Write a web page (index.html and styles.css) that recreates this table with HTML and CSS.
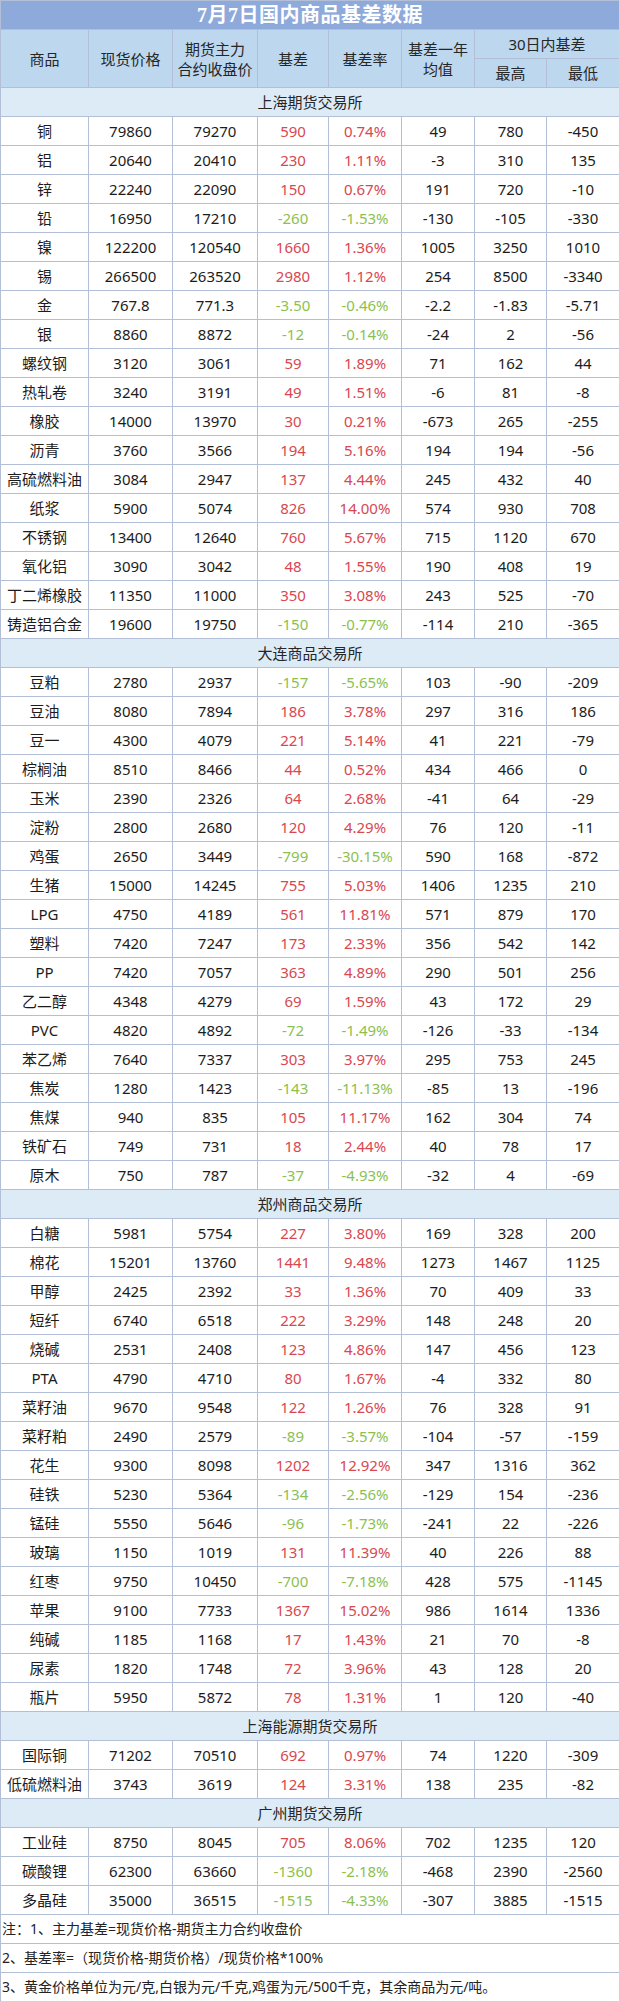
FILE: index.html
```html
<!DOCTYPE html>
<html lang="zh-CN">
<head>
<meta charset="utf-8">
<title>7月7日国内商品基差数据</title>
<link rel="stylesheet" href="styles.css">
</head>
<body>
<table class="basis">
<colgroup>
<col class="c1"><col class="c2"><col class="c3"><col class="c4"><col class="c5"><col class="c6"><col class="c7"><col class="c8">
</colgroup>
<thead>
<tr class="title"><th colspan="8">7月7日国内商品基差数据</th></tr>
<tr class="head">
<th rowspan="2">商品</th><th rowspan="2">现货价格</th><th rowspan="2" class="two">期货主力<br>合约收盘价</th><th rowspan="2">基差</th><th rowspan="2">基差率</th><th rowspan="2" class="two">基差一年<br>均值</th><th colspan="2">30日内基差</th>
</tr>
<tr class="head"><th>最高</th><th>最低</th></tr>
</thead>
<tbody>
<tr class="sec"><td colspan="8">上海期货交易所</td></tr>
<tr><td>铜</td><td>79860</td><td>79270</td><td class="r">590</td><td class="r">0.74%</td><td>49</td><td>780</td><td>-450</td></tr>
<tr><td>铝</td><td>20640</td><td>20410</td><td class="r">230</td><td class="r">1.11%</td><td>-3</td><td>310</td><td>135</td></tr>
<tr><td>锌</td><td>22240</td><td>22090</td><td class="r">150</td><td class="r">0.67%</td><td>191</td><td>720</td><td>-10</td></tr>
<tr><td>铅</td><td>16950</td><td>17210</td><td class="g">-260</td><td class="g">-1.53%</td><td>-130</td><td>-105</td><td>-330</td></tr>
<tr><td>镍</td><td>122200</td><td>120540</td><td class="r">1660</td><td class="r">1.36%</td><td>1005</td><td>3250</td><td>1010</td></tr>
<tr><td>锡</td><td>266500</td><td>263520</td><td class="r">2980</td><td class="r">1.12%</td><td>254</td><td>8500</td><td>-3340</td></tr>
<tr><td>金</td><td>767.8</td><td>771.3</td><td class="g">-3.50</td><td class="g">-0.46%</td><td>-2.2</td><td>-1.83</td><td>-5.71</td></tr>
<tr><td>银</td><td>8860</td><td>8872</td><td class="g">-12</td><td class="g">-0.14%</td><td>-24</td><td>2</td><td>-56</td></tr>
<tr><td>螺纹钢</td><td>3120</td><td>3061</td><td class="r">59</td><td class="r">1.89%</td><td>71</td><td>162</td><td>44</td></tr>
<tr><td>热轧卷</td><td>3240</td><td>3191</td><td class="r">49</td><td class="r">1.51%</td><td>-6</td><td>81</td><td>-8</td></tr>
<tr><td>橡胶</td><td>14000</td><td>13970</td><td class="r">30</td><td class="r">0.21%</td><td>-673</td><td>265</td><td>-255</td></tr>
<tr><td>沥青</td><td>3760</td><td>3566</td><td class="r">194</td><td class="r">5.16%</td><td>194</td><td>194</td><td>-56</td></tr>
<tr><td>高硫燃料油</td><td>3084</td><td>2947</td><td class="r">137</td><td class="r">4.44%</td><td>245</td><td>432</td><td>40</td></tr>
<tr><td>纸浆</td><td>5900</td><td>5074</td><td class="r">826</td><td class="r">14.00%</td><td>574</td><td>930</td><td>708</td></tr>
<tr><td>不锈钢</td><td>13400</td><td>12640</td><td class="r">760</td><td class="r">5.67%</td><td>715</td><td>1120</td><td>670</td></tr>
<tr><td>氧化铝</td><td>3090</td><td>3042</td><td class="r">48</td><td class="r">1.55%</td><td>190</td><td>408</td><td>19</td></tr>
<tr><td>丁二烯橡胶</td><td>11350</td><td>11000</td><td class="r">350</td><td class="r">3.08%</td><td>243</td><td>525</td><td>-70</td></tr>
<tr><td>铸造铝合金</td><td>19600</td><td>19750</td><td class="g">-150</td><td class="g">-0.77%</td><td>-114</td><td>210</td><td>-365</td></tr>
<tr class="sec"><td colspan="8">大连商品交易所</td></tr>
<tr><td>豆粕</td><td>2780</td><td>2937</td><td class="g">-157</td><td class="g">-5.65%</td><td>103</td><td>-90</td><td>-209</td></tr>
<tr><td>豆油</td><td>8080</td><td>7894</td><td class="r">186</td><td class="r">3.78%</td><td>297</td><td>316</td><td>186</td></tr>
<tr><td>豆一</td><td>4300</td><td>4079</td><td class="r">221</td><td class="r">5.14%</td><td>41</td><td>221</td><td>-79</td></tr>
<tr><td>棕榈油</td><td>8510</td><td>8466</td><td class="r">44</td><td class="r">0.52%</td><td>434</td><td>466</td><td>0</td></tr>
<tr><td>玉米</td><td>2390</td><td>2326</td><td class="r">64</td><td class="r">2.68%</td><td>-41</td><td>64</td><td>-29</td></tr>
<tr><td>淀粉</td><td>2800</td><td>2680</td><td class="r">120</td><td class="r">4.29%</td><td>76</td><td>120</td><td>-11</td></tr>
<tr><td>鸡蛋</td><td>2650</td><td>3449</td><td class="g">-799</td><td class="g">-30.15%</td><td>590</td><td>168</td><td>-872</td></tr>
<tr><td>生猪</td><td>15000</td><td>14245</td><td class="r">755</td><td class="r">5.03%</td><td>1406</td><td>1235</td><td>210</td></tr>
<tr><td>LPG</td><td>4750</td><td>4189</td><td class="r">561</td><td class="r">11.81%</td><td>571</td><td>879</td><td>170</td></tr>
<tr><td>塑料</td><td>7420</td><td>7247</td><td class="r">173</td><td class="r">2.33%</td><td>356</td><td>542</td><td>142</td></tr>
<tr><td>PP</td><td>7420</td><td>7057</td><td class="r">363</td><td class="r">4.89%</td><td>290</td><td>501</td><td>256</td></tr>
<tr><td>乙二醇</td><td>4348</td><td>4279</td><td class="r">69</td><td class="r">1.59%</td><td>43</td><td>172</td><td>29</td></tr>
<tr><td>PVC</td><td>4820</td><td>4892</td><td class="g">-72</td><td class="g">-1.49%</td><td>-126</td><td>-33</td><td>-134</td></tr>
<tr><td>苯乙烯</td><td>7640</td><td>7337</td><td class="r">303</td><td class="r">3.97%</td><td>295</td><td>753</td><td>245</td></tr>
<tr><td>焦炭</td><td>1280</td><td>1423</td><td class="g">-143</td><td class="g">-11.13%</td><td>-85</td><td>13</td><td>-196</td></tr>
<tr><td>焦煤</td><td>940</td><td>835</td><td class="r">105</td><td class="r">11.17%</td><td>162</td><td>304</td><td>74</td></tr>
<tr><td>铁矿石</td><td>749</td><td>731</td><td class="r">18</td><td class="r">2.44%</td><td>40</td><td>78</td><td>17</td></tr>
<tr><td>原木</td><td>750</td><td>787</td><td class="g">-37</td><td class="g">-4.93%</td><td>-32</td><td>4</td><td>-69</td></tr>
<tr class="sec"><td colspan="8">郑州商品交易所</td></tr>
<tr><td>白糖</td><td>5981</td><td>5754</td><td class="r">227</td><td class="r">3.80%</td><td>169</td><td>328</td><td>200</td></tr>
<tr><td>棉花</td><td>15201</td><td>13760</td><td class="r">1441</td><td class="r">9.48%</td><td>1273</td><td>1467</td><td>1125</td></tr>
<tr><td>甲醇</td><td>2425</td><td>2392</td><td class="r">33</td><td class="r">1.36%</td><td>70</td><td>409</td><td>33</td></tr>
<tr><td>短纤</td><td>6740</td><td>6518</td><td class="r">222</td><td class="r">3.29%</td><td>148</td><td>248</td><td>20</td></tr>
<tr><td>烧碱</td><td>2531</td><td>2408</td><td class="r">123</td><td class="r">4.86%</td><td>147</td><td>456</td><td>123</td></tr>
<tr><td>PTA</td><td>4790</td><td>4710</td><td class="r">80</td><td class="r">1.67%</td><td>-4</td><td>332</td><td>80</td></tr>
<tr><td>菜籽油</td><td>9670</td><td>9548</td><td class="r">122</td><td class="r">1.26%</td><td>76</td><td>328</td><td>91</td></tr>
<tr><td>菜籽粕</td><td>2490</td><td>2579</td><td class="g">-89</td><td class="g">-3.57%</td><td>-104</td><td>-57</td><td>-159</td></tr>
<tr><td>花生</td><td>9300</td><td>8098</td><td class="r">1202</td><td class="r">12.92%</td><td>347</td><td>1316</td><td>362</td></tr>
<tr><td>硅铁</td><td>5230</td><td>5364</td><td class="g">-134</td><td class="g">-2.56%</td><td>-129</td><td>154</td><td>-236</td></tr>
<tr><td>锰硅</td><td>5550</td><td>5646</td><td class="g">-96</td><td class="g">-1.73%</td><td>-241</td><td>22</td><td>-226</td></tr>
<tr><td>玻璃</td><td>1150</td><td>1019</td><td class="r">131</td><td class="r">11.39%</td><td>40</td><td>226</td><td>88</td></tr>
<tr><td>红枣</td><td>9750</td><td>10450</td><td class="g">-700</td><td class="g">-7.18%</td><td>428</td><td>575</td><td>-1145</td></tr>
<tr><td>苹果</td><td>9100</td><td>7733</td><td class="r">1367</td><td class="r">15.02%</td><td>986</td><td>1614</td><td>1336</td></tr>
<tr><td>纯碱</td><td>1185</td><td>1168</td><td class="r">17</td><td class="r">1.43%</td><td>21</td><td>70</td><td>-8</td></tr>
<tr><td>尿素</td><td>1820</td><td>1748</td><td class="r">72</td><td class="r">3.96%</td><td>43</td><td>128</td><td>20</td></tr>
<tr><td>瓶片</td><td>5950</td><td>5872</td><td class="r">78</td><td class="r">1.31%</td><td>1</td><td>120</td><td>-40</td></tr>
<tr class="sec"><td colspan="8">上海能源期货交易所</td></tr>
<tr><td>国际铜</td><td>71202</td><td>70510</td><td class="r">692</td><td class="r">0.97%</td><td>74</td><td>1220</td><td>-309</td></tr>
<tr><td>低硫燃料油</td><td>3743</td><td>3619</td><td class="r">124</td><td class="r">3.31%</td><td>138</td><td>235</td><td>-82</td></tr>
<tr class="sec"><td colspan="8">广州期货交易所</td></tr>
<tr><td>工业硅</td><td>8750</td><td>8045</td><td class="r">705</td><td class="r">8.06%</td><td>702</td><td>1235</td><td>120</td></tr>
<tr><td>碳酸锂</td><td>62300</td><td>63660</td><td class="g">-1360</td><td class="g">-2.18%</td><td>-468</td><td>2390</td><td>-2560</td></tr>
<tr><td>多晶硅</td><td>35000</td><td>36515</td><td class="g">-1515</td><td class="g">-4.33%</td><td>-307</td><td>3885</td><td>-1515</td></tr>
</tbody>
<tfoot>
<tr class="note"><td colspan="8">注：1、主力基差=现货价格-期货主力合约收盘价</td></tr>
<tr class="note"><td colspan="8">2、基差率=（现货价格-期货价格）/现货价格*100%</td></tr>
<tr class="note"><td colspan="8">3、黄金价格单位为元/克,白银为元/千克,鸡蛋为元/500千克，其余商品为元/吨。</td></tr>
</tfoot>
</table>
</body>
</html>
```
FILE: styles.css
```css
html, body {
  margin: 0;
  padding: 0;
  background: #ffffff;
}

.basis {
  width: 619px;
  table-layout: fixed;
  border-collapse: collapse;
  font-family: "Noto Sans", "Noto Sans CJK SC", sans-serif;
  font-size: 15px;
  color: #1c1c1c;
}

.c1 { width: 88px; }
.c2 { width: 84px; }
.c3 { width: 85px; }
.c4 { width: 71px; }
.c5 { width: 73px; }
.c6 { width: 73px; }
.c7 { width: 72px; }
.c8 { width: 73px; }

.basis th,
.basis td {
  border: 1px solid #b3bfd6;
  padding: 0;
  text-align: center;
  vertical-align: middle;
  white-space: nowrap;
  font-weight: normal;
  line-height: 20px;
}

.basis tr {
  height: 29px;
}

.title th {
  background: #8eaadb;
  color: #ffffff;
  font-family: "Liberation Serif", "Noto Sans CJK SC", serif;
  font-weight: bold;
  font-size: 20px;
  letter-spacing: 0.5px;
}

.head th {
  background: #bdd7ee;
  color: #262626;
}

.sec td {
  background: #ddebf7;
  color: #262626;
}

.r { color: #d9474f; }
.g { color: #8cbf4f; }

.note td {
  text-align: left;
  font-size: 14px;
  padding-left: 1px;
  color: #222222;
}
```
